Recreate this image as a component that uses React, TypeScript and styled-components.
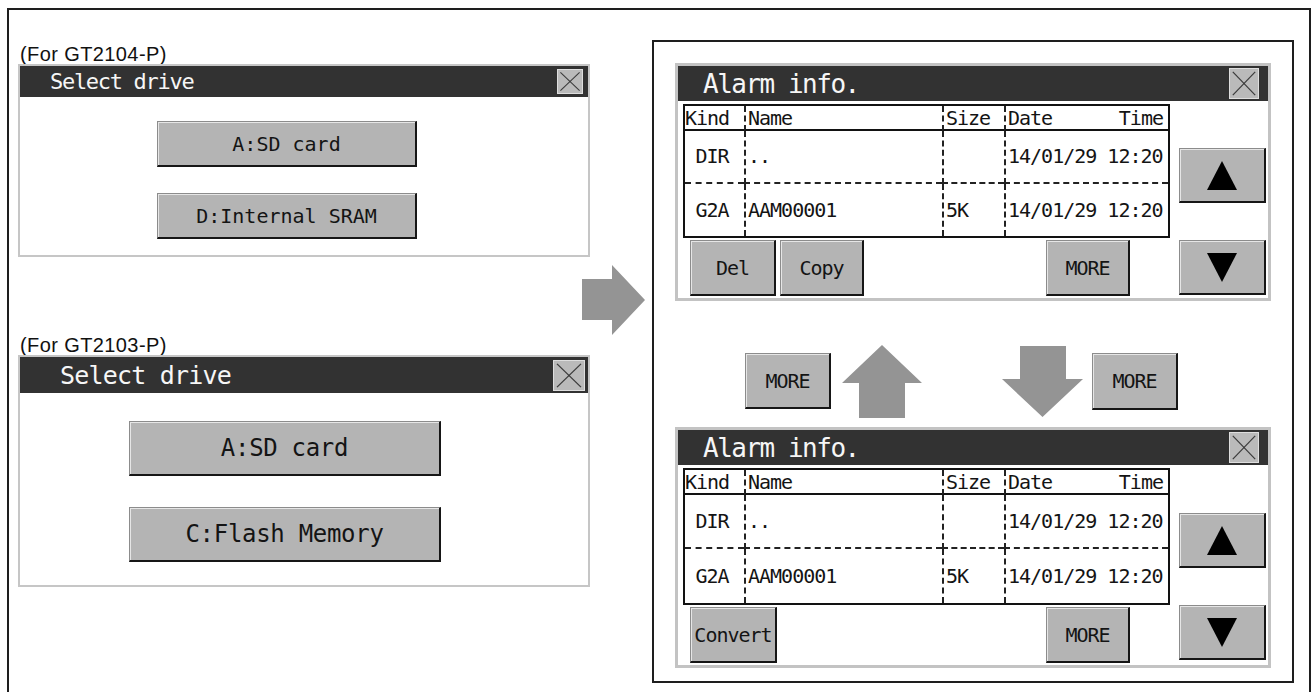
import React from "react";
import styled, { createGlobalStyle } from "styled-components";

const Global = createGlobalStyle`
  html, body { margin: 0; padding: 0; background: #ffffff; }
  body { overflow: hidden; }
`;

const MONO = `"DejaVu Sans Mono", "Liberation Mono", monospace`;

const Frame = styled.div`
  box-sizing: border-box;
  margin: 8px 0 0 7px;
  width: 1304px;
  height: 700px;
  border: 2px solid #1e1e1e;
  border-bottom: none;
  display: flex;
  align-items: flex-start;
  padding-left: 9px;
`;

const LeftCol = styled.div`
  width: 572px;
  flex-shrink: 0;
  padding-top: 35px;
  display: flex;
  flex-direction: column;
`;

const Caption = styled.div<{ $mt?: number }>`
  height: 19px;
  line-height: 19px;
  margin-top: ${(p) => p.$mt ?? 0}px;
  padding-left: 2px;
  font-family: "Liberation Sans", Arial, sans-serif;
  font-size: 20px;
  letter-spacing: 0.4px;
  color: #111;
`;

const Dialog = styled.div<{ $h: number }>`
  box-sizing: border-box;
  width: 572px;
  height: ${(p) => p.$h}px;
  border: 2px solid #c6c6c6;
  background: #fff;
  display: flex;
  flex-direction: column;
`;

const TitleBar = styled.div<{ $h: number; $pl: number; $size: number; $pr: number; $ls: number }>`
  height: ${(p) => p.$h}px;
  flex-shrink: 0;
  background: #323232;
  color: #f6f6f6;
  display: flex;
  align-items: center;
  justify-content: space-between;
  padding: 0 ${(p) => p.$pr}px 0 ${(p) => p.$pl}px;
  font-family: ${MONO};
  font-size: ${(p) => p.$size}px;
  letter-spacing: ${(p) => p.$ls}px;
  white-space: pre;
`;

const CloseBox = styled.div<{ $w: number; $h: number }>`
  box-sizing: border-box;
  width: ${(p) => p.$w}px;
  height: ${(p) => p.$h}px;
  background: #bababa;
  border: 1px solid #dedede;
  display: flex;
  svg { display: block; width: 100%; height: 100%; }
`;

const DialogBody = styled.div<{ $pt: number; $pl: number; $gap: number }>`
  display: flex;
  flex-direction: column;
  gap: ${(p) => p.$gap}px;
  padding: ${(p) => p.$pt}px 0 0 ${(p) => p.$pl}px;
`;

const GtButton = styled.div<{ $w: number; $h: number; $size?: number; $ls?: number }>`
  box-sizing: border-box;
  width: ${(p) => p.$w}px;
  height: ${(p) => p.$h}px;
  flex-shrink: 0;
  background: #b4b4b4;
  border: 1px solid #8c8c8c;
  border-right: 2px solid #161616;
  border-bottom: 2px solid #161616;
  box-shadow: inset 1px 1px 0 #e6e6e6;
  display: flex;
  align-items: center;
  justify-content: center;
  font-family: ${MONO};
  font-size: ${(p) => p.$size ?? 20}px;
  letter-spacing: ${(p) => p.$ls ?? -1}px;
  color: #141414;
  white-space: pre;
`;

const ArrowSlot = styled.div<{ $ml: number; $mt: number }>`
  flex-shrink: 0;
  margin-left: ${(p) => p.$ml}px;
  margin-top: ${(p) => p.$mt}px;
  display: flex;
  svg { display: block; }
`;

const RightPanel = styled.div`
  box-sizing: border-box;
  flex-shrink: 0;
  width: 642px;
  height: 643px;
  margin: 30px 0 0 7px;
  border: 2px solid #1e1e1e;
  padding: 21px 0 0 21px;
  display: flex;
  flex-direction: column;
`;

const AlarmPanel = styled.div<{ $h: number }>`
  box-sizing: border-box;
  width: 596px;
  height: ${(p) => p.$h}px;
  border: 3px solid #c3c3c3;
  background: #fff;
  display: flex;
  flex-direction: column;
`;

const AlarmBody = styled.div`
  display: grid;
  grid-template-columns: 487px 87px;
  column-gap: 9px;
  padding: 3px 0 0 5px;
`;

const LeftPart = styled.div`
  display: flex;
  flex-direction: column;
  gap: 2px;
`;

const Table = styled.div<{ $h: number }>`
  box-sizing: border-box;
  height: ${(p) => p.$h}px;
  border: 2px solid #121212;
  display: grid;
  grid-template-columns: 59px 198px 62px 1fr;
  grid-template-rows: 25px 1fr 1fr;
`;

type RowKind = "head" | "mid" | "last";

const Cell = styled.div<{ $first?: boolean; $row: RowKind; $align?: string }>`
  box-sizing: border-box;
  border-left: ${(p) => (p.$first ? "none" : "2px dashed #222")};
  border-bottom: ${(p) =>
    p.$row === "head" ? "2px solid #121212" : p.$row === "mid" ? "2px dashed #222" : "none"};
  display: flex;
  align-items: center;
  justify-content: ${(p) => p.$align ?? "flex-start"};
  padding: 0 5px 0 ${(p) => (p.$first ? 0 : 2)}px;
  font-family: ${MONO};
  font-size: 20px;
  letter-spacing: -1px;
  color: #141414;
  white-space: pre;
  overflow: hidden;
`;

const ButtonRow = styled.div`
  display: flex;
  gap: 4px;
  padding-left: 7px;
  height: 56px;
`;

const Spacer = styled.div`
  flex: 1;
`;

const MoreSlot = styled.div`
  margin-right: 40px;
  display: flex;
`;

const NavCol = styled.div<{ $pt: number }>`
  display: flex;
  flex-direction: column;
  gap: 37px;
  padding-top: ${(p) => p.$pt}px;
`;

const MiddleRow = styled.div`
  box-sizing: border-box;
  height: 126px;
  padding: 34px 0 0 70px;
  display: flex;
  align-items: center;
`;

const MidItem = styled.div<{ $ml: number }>`
  margin-left: ${(p) => p.$ml}px;
  display: flex;
  svg { display: block; }
`;

const XIcon = () => (
  <svg viewBox="0 0 30 30" preserveAspectRatio="none">
    <line x1="3" y1="3" x2="27" y2="27" stroke="#3a3a3a" strokeWidth="1.3" />
    <line x1="27" y1="3" x2="3" y2="27" stroke="#3a3a3a" strokeWidth="1.3" />
  </svg>
);

const Triangle = ({ up }: { up: boolean }) => (
  <svg width="30" height="29" viewBox="0 0 30 29">
    {up ? <polygon points="15,0 30,29 0,29" fill="#000" /> : <polygon points="0,0 30,0 15,29" fill="#000" />}
  </svg>
);

const ARROW = "#949494";

const RightArrow = () => (
  <svg width="63" height="70" viewBox="0 0 63 70">
    <polygon points="0,14 30,14 30,0 63,35 30,70 30,55 0,55" fill={ARROW} />
  </svg>
);

const UpArrow = () => (
  <svg width="80" height="73" viewBox="0 0 80 73">
    <polygon points="40,0 80,38 63,38 63,73 17,73 17,38 0,38" fill={ARROW} />
  </svg>
);

const DownArrow = () => (
  <svg width="81" height="71" viewBox="0 0 81 71">
    <polygon points="18,0 64,0 64,33 81,33 40.5,71 0,33 18,33" fill={ARROW} />
  </svg>
);

const rows = [
  { kind: "DIR", name: "..", size: "", date: "14/01/29 12:20" },
  { kind: "G2A", name: "AAM00001", size: "5K", date: "14/01/29 12:20" },
];

type AlarmProps = {
  buttons: { label: string; w: number }[];
  panelH: number;
  tableH: number;
  navPt: number;
};

const AlarmInfo = ({ buttons, panelH, tableH, navPt }: AlarmProps) => (
  <AlarmPanel $h={panelH}>
    <TitleBar $h={35} $pl={25} $pr={9} $size={26} $ls={-1.5}>
      <span>Alarm info.</span>
      <CloseBox $w={30} $h={31}>
        <XIcon />
      </CloseBox>
    </TitleBar>
    <AlarmBody>
      <LeftPart>
        <Table $h={tableH}>
          <Cell $first $row="head">Kind</Cell>
          <Cell $row="head">Name</Cell>
          <Cell $row="head">Size</Cell>
          <Cell $row="head" $align="space-between">
            <span>Date</span>
            <span>Time</span>
          </Cell>
          {rows.map((r, i) => {
            const rk: RowKind = i === 0 ? "mid" : "last";
            return (
              <React.Fragment key={i}>
                <Cell $first $row={rk} $align="center">{r.kind}</Cell>
                <Cell $row={rk}>{r.name}</Cell>
                <Cell $row={rk}>{r.size}</Cell>
                <Cell $row={rk}>{r.date}</Cell>
              </React.Fragment>
            );
          })}
        </Table>
        <ButtonRow>
          {buttons.map((b) => (
            <GtButton key={b.label} $w={b.w} $h={56}>
              {b.label}
            </GtButton>
          ))}
          <Spacer />
          <MoreSlot>
            <GtButton $w={84} $h={56}>MORE</GtButton>
          </MoreSlot>
        </ButtonRow>
      </LeftPart>
      <NavCol $pt={navPt}>
        <GtButton $w={87} $h={55}>
          <Triangle up />
        </GtButton>
        <GtButton $w={87} $h={55}>
          <Triangle up={false} />
        </GtButton>
      </NavCol>
    </AlarmBody>
  </AlarmPanel>
);

export default function App() {
  return (
    <>
      <Global />
      <Frame>
        <LeftCol>
          <Caption>(For GT2104-P)</Caption>
          <Dialog $h={193}>
            <TitleBar $h={31} $pl={30} $pr={5} $size={22} $ls={-1.3}>
              <span>Select drive</span>
              <CloseBox $w={26} $h={25}>
                <XIcon />
              </CloseBox>
            </TitleBar>
            <DialogBody $pt={24} $pl={137} $gap={26}>
              <GtButton $w={260} $h={46} $size={20} $ls={0}>A:SD card</GtButton>
              <GtButton $w={260} $h={46} $size={20} $ls={0}>D:Internal SRAM</GtButton>
            </DialogBody>
          </Dialog>
          <Caption $mt={79}>(For GT2103-P)</Caption>
          <Dialog $h={232}>
            <TitleBar $h={36} $pl={40} $pr={3} $size={25} $ls={-0.8}>
              <span>Select drive</span>
              <CloseBox $w={32} $h={31}>
                <XIcon />
              </CloseBox>
            </TitleBar>
            <DialogBody $pt={28} $pl={109} $gap={31}>
              <GtButton $w={312} $h={55} $size={24} $ls={-0.3}>A:SD card</GtButton>
              <GtButton $w={312} $h={55} $size={24} $ls={-0.3}>C:Flash Memory</GtButton>
            </DialogBody>
          </Dialog>
        </LeftCol>
        <ArrowSlot $ml={-8} $mt={255}>
          <RightArrow />
        </ArrowSlot>
        <RightPanel>
          <AlarmInfo
            panelH={238}
            tableH={134}
            navPt={44}
            buttons={[
              { label: "Del", w: 86 },
              { label: "Copy", w: 84 },
            ]}
          />
          <MiddleRow>
            <MidItem $ml={0}>
              <GtButton $w={86} $h={56}>MORE</GtButton>
            </MidItem>
            <MidItem $ml={11}>
              <UpArrow />
            </MidItem>
            <MidItem $ml={80}>
              <DownArrow />
            </MidItem>
            <MidItem $ml={9}>
              <GtButton $w={86} $h={57}>MORE</GtButton>
            </MidItem>
          </MiddleRow>
          <AlarmInfo
            panelH={241}
            tableH={137}
            navPt={45}
            buttons={[{ label: "Convert", w: 87 }]}
          />
        </RightPanel>
      </Frame>
    </>
  );
}
